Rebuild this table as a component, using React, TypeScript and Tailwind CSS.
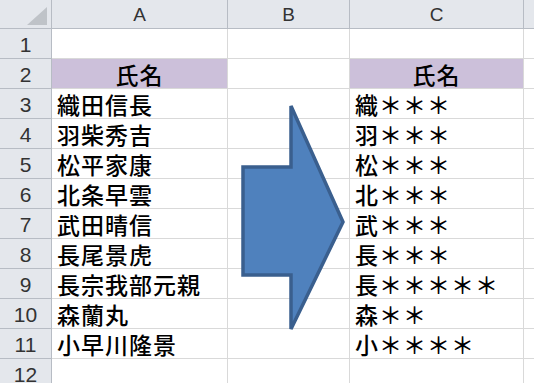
import React from "react";

const names = ["織田信長", "羽柴秀吉", "松平家康", "北条早雲", "武田晴信", "長尾景虎", "長宗我部元親", "森蘭丸", "小早川隆景"];
const masked = names.map((n) => n[0] + "＊".repeat(n.length - 1));

const jp = { fontFamily: '"Noto Sans CJK JP", "Noto Sans", sans-serif' } as React.CSSProperties;
const lat = { fontFamily: '"Liberation Sans", Arial, sans-serif' } as React.CSSProperties;

function Row({ num, a, c, header }: { num: number; a?: string; c?: string; header?: boolean }) {
  return (
    <>
      <div className="h-[30px] border-b border-r border-[#b7bcc4] bg-[#e4e7ec] flex items-center justify-center pt-[2px] text-[21px] leading-none text-[#333]" style={lat}>
        {num}
      </div>
      <div
        className={`h-[30px] border-b border-r border-[#d9d9d9] flex items-center pt-[1px] text-[23px] leading-none font-medium text-black tracking-[1px] ${header ? "bg-[#ccc0da] justify-center" : "pl-[5px]"}`}
        style={jp}
      >
        {a}
      </div>
      <div className="h-[30px] border-b border-r border-[#d9d9d9]" />
      <div
        className={`h-[30px] border-b border-r border-[#d9d9d9] flex items-center pt-[1px] text-[23px] leading-none font-medium text-black tracking-[1px] ${header ? "bg-[#ccc0da] justify-center" : "pl-[5px]"}`}
        style={jp}
      >
        {c}
      </div>
      <div className="h-[30px] border-b border-[#d9d9d9]" />
    </>
  );
}

export default function App() {
  return (
    <div className="relative w-[534px] h-[383px] overflow-hidden bg-white">
      <div className="grid grid-cols-[52px_176px_122px_174px_1fr]">
        <div className="h-[29px] border-b border-r border-[#b7bcc4] bg-[#e4e7ec] relative">
          <svg className="absolute left-[27px] top-[7px]" width="20" height="18" viewBox="0 0 20 18">
            <polygon points="20,0 20,18 0,18" fill="#bfc3c8" />
          </svg>
        </div>
        {["A", "B", "C"].map((l) => (
          <div key={l} className="h-[29px] border-b border-r border-[#b7bcc4] bg-[#e4e7ec] flex items-center justify-center text-[19px] leading-none text-[#333]" style={lat}>
            {l}
          </div>
        ))}
        <div className="h-[29px] border-b border-[#b7bcc4] bg-[#e4e7ec]" />
        <Row num={1} />
        <Row num={2} a="氏名" c="氏名" header />
        {names.map((n, i) => (
          <Row key={n} num={i + 3} a={n} c={masked[i]} />
        ))}
        <Row num={12} />
      </div>
      <svg className="absolute left-0 top-0" width="534" height="383" viewBox="0 0 534 383">
        <polygon
          points="243,167 291,167 291,106 343,222 291,329 291,275 243,275"
          fill="#4f81bd"
          stroke="#3a5f8e"
          strokeWidth="3.5"
          strokeLinejoin="miter"
        />
      </svg>
    </div>
  );
}
